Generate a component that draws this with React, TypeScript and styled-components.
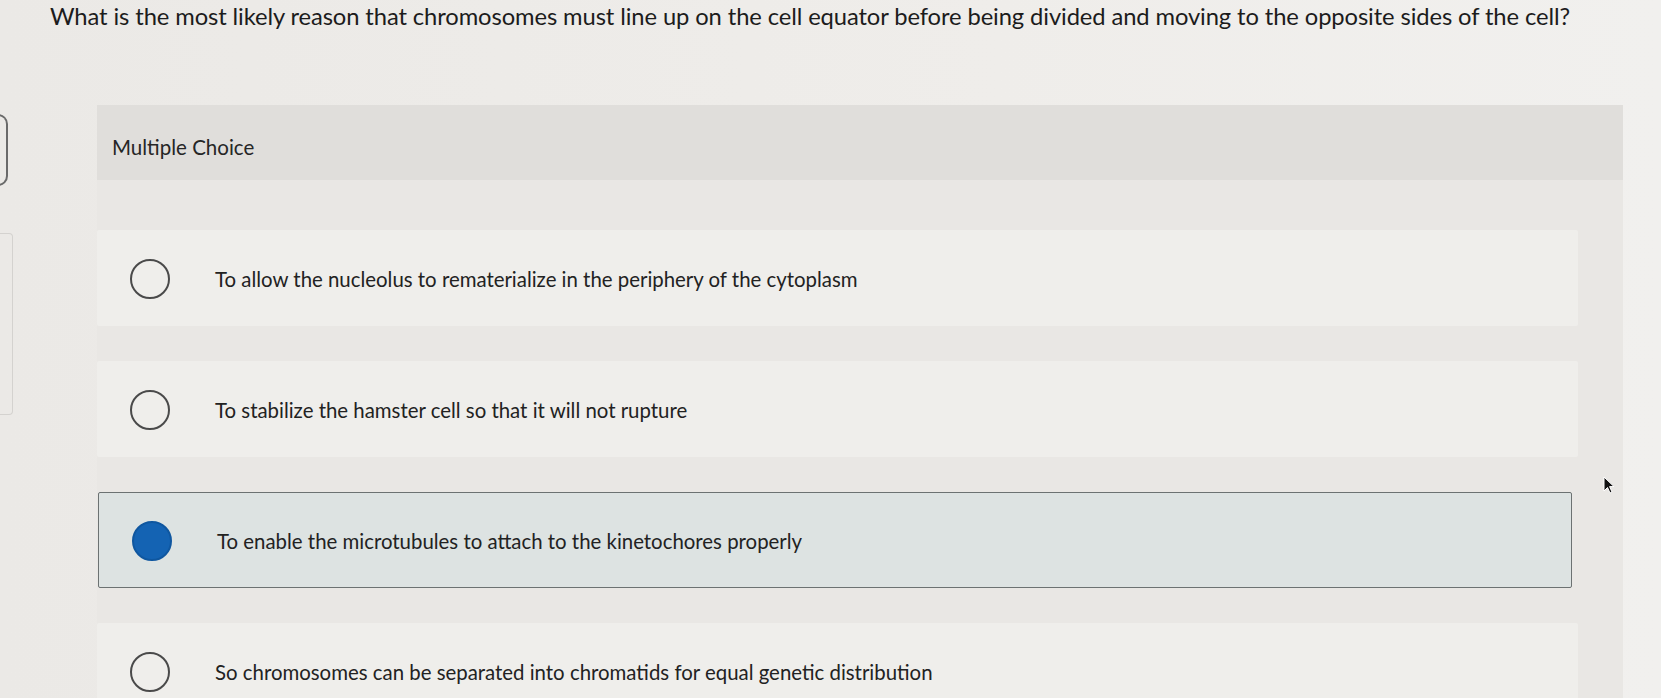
import React from "react";
import styled, { createGlobalStyle } from "styled-components";

const Global = createGlobalStyle`
  html, body { margin: 0; padding: 0; }
  body {
    background: #eeece9;
    font-family: Lato, "Open Sans", "Liberation Sans", sans-serif;
    color: #1f1f1f;
    overflow: hidden;
  }
`;

const Page = styled.div`
  position: relative;
  width: 1661px;
  height: 698px;
  overflow: hidden;
  background: linear-gradient(90deg, #ebe9e6 0%, #efedea 60%, #f1f0ee 100%);
`;

const Question = styled.h1`
  margin: 0;
  padding: 2px 0 0 50px;
  height: 105px;
  box-sizing: border-box;
  font-size: 23.75px;
  font-weight: 400;
  letter-spacing: -0.1px;
  color: #1c1c1c;
  white-space: nowrap;
`;

const Row = styled.div`
  display: flex;
  align-items: flex-start;
`;

const Rail = styled.div`
  width: 97px;
  display: flex;
  flex-direction: column;
  padding-top: 9px;
  gap: 47px;
`;

const Bracket = styled.div`
  width: 8px;
  height: 68px;
  border: 2px solid #6a6a6a;
  border-left: none;
  border-radius: 0 16px 16px 0;
  margin-left: -2px;
`;

const SideBox = styled.div`
  width: 12px;
  height: 180px;
  border: 1px solid #d4d2cf;
  border-left: none;
  border-radius: 0 4px 4px 0;
`;

const Panel = styled.section`
  width: 1526px;
  background: #e9e7e4;
`;

const Header = styled.div`
  height: 75px;
  box-sizing: border-box;
  display: flex;
  align-items: center;
  padding: 8px 0 0 15px;
  background: #e0dedb;
  font-size: 20.5px;
  color: #262626;
`;

const List = styled.div`
  display: flex;
  flex-direction: column;
  gap: 35px;
  padding: 50px 45px 40px 0;
`;

const Card = styled.div<{ $selected?: boolean }>`
  height: 96px;
  box-sizing: border-box;
  display: flex;
  align-items: center;
  padding-left: 33px;
  padding-top: 2px;
  background: ${(p) => (p.$selected ? "#dde3e2" : "#efeeeb")};
  border: ${(p) => (p.$selected ? "1.5px solid #6c7272" : "none")};
  border-radius: 2px;
  margin-left: ${(p) => (p.$selected ? "1px" : "0")};
  margin-right: ${(p) => (p.$selected ? "6px" : "0")};
`;

const Radio = styled.span<{ $checked?: boolean }>`
  width: 40px;
  height: 40px;
  flex: none;
  box-sizing: border-box;
  border-radius: 50%;
  border: 2px solid ${(p) => (p.$checked ? "#0f57a0" : "#4a4a4a")};
  background: ${(p) => (p.$checked ? "#1463b3" : "transparent")};
`;

const Label = styled.span`
  margin-left: 45px;
  font-size: 20.4px;
  color: #222;
  white-space: nowrap;
`;

const Cursor = styled.svg`
  position: absolute;
  left: 1603px;
  top: 476px;
`;

const options = [
  "To allow the nucleolus to rematerialize in the periphery of the cytoplasm",
  "To stabilize the hamster cell so that it will not rupture",
  "To enable the microtubules to attach to the kinetochores properly",
  "So chromosomes can be separated into chromatids for equal genetic distribution",
];

export default function App() {
  return (
    <Page>
      <Global />
      <Question>
        What is the most likely reason that chromosomes must line up on the cell equator before being divided and moving to the opposite sides of the cell?
      </Question>
      <Row>
        <Rail>
          <Bracket />
          <SideBox />
        </Rail>
        <Panel>
          <Header>Multiple Choice</Header>
          <List>
            {options.map((o, i) => (
              <Card key={i} $selected={i === 2}>
                <Radio $checked={i === 2} />
                <Label>{o}</Label>
              </Card>
            ))}
          </List>
        </Panel>
      </Row>
      <Cursor width="12" height="20" viewBox="0 0 12 20">
        <path d="M1 1 L1 15 L4.5 11.5 L7 17 L9 16 L6.6 10.6 L11 10.6 Z" fill="#111" stroke="#fff" strokeWidth="1" />
      </Cursor>
    </Page>
  );
}
